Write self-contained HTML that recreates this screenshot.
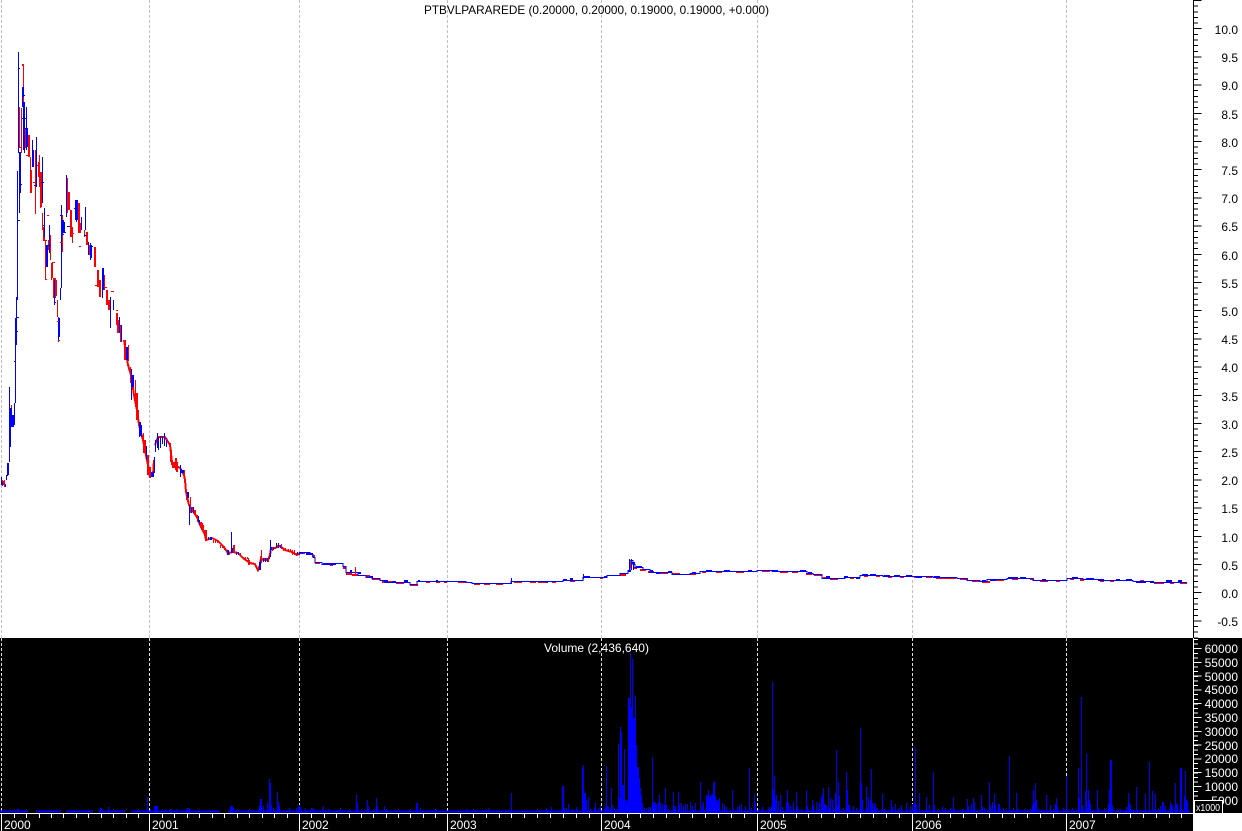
<!DOCTYPE html>
<html><head><meta charset="utf-8"><title>PTBVLPARAREDE</title>
<style>
html,body{margin:0;padding:0;background:#fff;width:1242px;height:831px;overflow:hidden}
svg{display:block;font-family:"Liberation Sans",Arial,sans-serif;font-size:12px}
.c path,.c line,.c rect{shape-rendering:crispEdges}
</style></head><body>
<svg class="c" width="1242" height="831" viewBox="0 0 1242 831" xmlns="http://www.w3.org/2000/svg">
<rect width="1242" height="831" fill="#fff"/>
<rect x="0" y="638" width="1242" height="175" fill="#000"/>
<rect x="0" y="813" width="1193" height="18" fill="#000"/>

<!-- gridlines -->
<g stroke="#c0c0c0" stroke-width="1" stroke-dasharray="3 2" fill="none">
<path d="M1.5 0V638M149.5 0V638M299.5 0V638M447.5 0V638M601.5 0V638M757.5 0V638M912.5 0V638M1066.5 0V638"/>
</g>
<g stroke="#e0e0e0" stroke-width="1" stroke-dasharray="3 2" fill="none">
<path d="M1.5 638V813M149.5 638V813M299.5 638V813M447.5 638V813M601.5 638V813M757.5 638V813M912.5 638V813M1066.5 638V813"/>
</g>

<!-- price tail red stubs -->
<path fill="none" stroke="#ff0000" stroke-width="2" d="M301 553H305M312 556H315M315 563H320M330 565H333M343 568H346M346 574H352M352 575H358M366 576H370M372 579H380M382 582H392M396 583H404M410 585H418M426 582H430M436 582H440M444 582H447M458 582H466M474 584H480M484 584H490M496 584H503M514 582H522M530 582H536M538 582H546M552 582H556M570 581H575M600 578H603M620 575H626M634 568H637M640 570H646M648 572H654M660 573H668M672 574H680M690 574H696M702 572H706M716 572H722M736 572H744M762 571H770M780 572H788M792 572H798M806 574H812M814 575H822M823 578H828M830 579H838M850 578H854M864 576H868M876 576H880M888 577H892M900 577H904M914 577H920M926 577H932M936 578H956M960 579H968M972 581H980M982 582H990M996 580H1004M1012 579H1018M1030 579H1034M1040 581H1048M1056 581H1060M1070 579H1074M1080 580H1084M1100 581H1104M1110 581H1114M1140 581H1144M1154 583H1164M1170 583H1174M1180 583H1187"/>
<!-- price tail stepped blue line -->
<path fill="none" stroke="#0000ff" stroke-width="1" d="M300 552.5H310V554.5H313V557.5H315V562.5H322V564.5H325V563.5H343V566.5H346V572.5H358V575.5H366V577.5H372V578.5H380V580.5H385V582.5H410V584.5H417V581.5H466V582.5H472V583.5H511V581.5H563V580.5H583V577.5H607V575.5H620V573.5H628V570.5H630V560.5H633V564.5H635V567.5H643V569.5H650V572.5H672V574.5H690V573.5H700V571.5H757V570.5H772V571.5H807V573.5H813V574.5H822V578.5H845V577.5H860V575.5H883V576.5H933V577.5H957V578.5H967V580.5H980V581.5H987V579.5H1007V578.5H1033V580.5H1067V578.5H1083V579.5H1100V580.5H1133V581.5H1153V582.5H1187"/>
<!-- price tail blue blocks -->
<path fill="none" stroke="#0000ff" stroke-width="2" d="M300 553H303M306 554H313M323 564H336M350 571H352M358 573H361M369 577H373M384 581H388M392 582H396M404 581H408M418 581H420M436 581H438M546 582H548M563 580H567M570 579H573M584 577H590M604 577H607M628 571H631M632 563H635M636 567H642M650 571H653M656 573H660M668 572H672M692 573H696M706 571H712M724 571H730M748 571H752M772 571H778M800 571H806M808 573H812M826 577H830M844 577H848M856 578H860M862 575H868M870 575H876M884 576H890M894 576H900M906 576H912M916 577H922M934 577H940M982 581H986M990 580H996M1008 578H1018M1020 578H1026M1042 580H1046M1072 578H1078M1086 579H1094M1098 580H1104M1116 580H1120M1126 580H1132M1136 582H1146M1150 582H1154M1166 581H1172M1178 581H1182"/>
<path fill="none" stroke="#0000ff" stroke-width="1" d="M511.5 578V584M583.5 574V579M629.5 559V570M631.5 559V570M633.5 562V570"/>
<path fill="none" stroke="#ff0000" stroke-width="1" d="M355.5 567V574M630.5 562V568"/>

<!-- early section connector -->
<path fill="none" stroke="#ff0000" stroke-width="2" d="M124 340L128 365L131 375L134 395L137 410L139 425L143 440L146 455L148 465L150 478M153 475L154 460M155 445L158 437L165 437L170 445L172 462L175 465L180 468L184 475L185 480L186 492L189 505L192 510L197 517L200 525L205 535L206 540L212 538L218 541L223 546L228 553L233 552L238 553L243 558L250 563L255 564L258 570L260 565L261 558L263 560L268 560L270 555L271 548L275 548L280 546L285 550L292 552L297 555L300 553"/>

<!-- price red bars -->
<path fill="none" stroke="#ff0000" stroke-width="1" d="M2.5 480V486M3.5 481V485M4.5 480V487M9.5 405V455M11.5 405V423M21.5 108V153M19.5 107V147M22.5 64V66M23.5 64V140M24.5 128V153M25.5 128V148M28.5 135V157M29.5 135V157M30.5 157V193M31.5 170V193M35.5 150V214M38.5 162V177M39.5 155V187M40.5 172V208M41.5 172V207M42.5 213V230M43.5 227V241M44.5 227V241M45.5 240V279M48.5 240V250M50.5 235V260M51.5 263V280M52.5 263V278M53.5 278V298M54.5 278V290M55.5 278V298M56.5 280V296M57.5 300V317M58.5 317V342M62.5 215V252M67.5 178V213M68.5 192V210M69.5 192V210M70.5 210V237M71.5 210V237M72.5 227V243M78.5 203V233M79.5 203V233M80.5 223V233M84.5 230V237M86.5 232V245M87.5 232V245M89.5 245V255M94.5 247V267M95.5 247V267M97.5 270V287M98.5 270V287M99.5 280V297M100.5 280V297M104.5 275V290M106.5 290V305M107.5 290V305M108.5 300V310M109.5 300V310M116.5 313V325M117.5 313V333M118.5 320V333M120.5 325V342M124.5 340V360M125.5 340V360M128.5 345V361M130.5 367V383M135.5 380V407M136.5 393V420M137.5 393V420M138.5 410V425M143.5 433V453M144.5 440V453M145.5 440V453M147.5 455V475M148.5 455V475M149.5 467V478M150.5 467V478M170.5 443V462M171.5 450V465M172.5 462V468M173.5 462V468M174.5 462V468M175.5 458V470M176.5 458V472M177.5 462V472M184.5 470V478M185.5 480V492M186.5 490V500M190.5 497V513M192.5 507V512M194.5 510V513M195.5 510V516M197.5 515V522M200.5 522V528M201.5 522V530M202.5 523V530M203.5 525V530M204.5 530V533M205.5 530V540M206.5 530V540M213.5 540V543M215.5 540V543M217.5 540V543M220.5 545V548M222.5 545V548M224.5 546V550M229.5 552V555M233.5 545V552M234.5 545V552M240.5 553V556M243.5 557V559M245.5 557V559M247.5 557V559M248.5 558V565M249.5 560V565M252.5 563V564M254.5 563V564M257.5 568V571M258.5 568V571M261.5 550V563M264.5 558V561M266.5 558V561M268.5 560V562M272.5 548V551M277.5 545V548M281.5 544V549M283.5 548V551M285.5 548V551M288.5 549V551M290.5 549V551M292.5 550V555M294.5 550V555M296.5 553V556"/>
<!-- price blue bars -->
<path fill="none" stroke="#0000ff" stroke-width="1" d="M1.5 477V485M2.5 482V485M5.5 484V487M6.5 475V480M7.5 463V476M8.5 463V475M9.5 387V462M10.5 408V447M11.5 408V427M12.5 415V427M13.5 415V427M14.5 403V425M15.5 318V403M16.5 297V345M17.5 171V300M18.5 52V153M19.5 152V213M20.5 152V193M22.5 87V107M23.5 87V97M23.5 102V150M24.5 102V153M26.5 107V150M27.5 128V147M32.5 140V167M33.5 150V167M36.5 137V187M42.5 157V203M44.5 208V237M46.5 245V267M47.5 245V267M49.5 225V253M54.5 280V305M59.5 318V337M58.5 318V340M60.5 288V300M61.5 205V288M62.5 220V235M63.5 220V233M64.5 222V233M66.5 175V217M75.5 200V220M76.5 200V222M77.5 200V220M81.5 217V230M85.5 207V230M88.5 242V255M90.5 243V260M91.5 245V258M102.5 268V298M103.5 268V290M110.5 297V328M113.5 300V310M119.5 317V333M121.5 325V342M126.5 347V360M127.5 347V360M131.5 369V400M132.5 375V387M133.5 375V387M139.5 422V437M140.5 422V436M141.5 425V437M146.5 446V460M151.5 472V477M152.5 472V477M153.5 472V477M154.5 457V473M155.5 440V452M157.5 433V448M158.5 437V450M160.5 436V448M162.5 436V444M164.5 433V446M166.5 440V447M180.5 465V477M181.5 469V473M182.5 470V473M183.5 470V473M187.5 492V498M188.5 492V498M189.5 505V525M191.5 507V513M193.5 507V513M198.5 516V522M199.5 520V525M208.5 537V540M210.5 537V540M211.5 537V540M227.5 550V555M228.5 550V555M231.5 532V553M232.5 548V553M236.5 552V555M238.5 552V555M259.5 562V570M260.5 560V570M263.5 558V562M265.5 558V562M267.5 558V562M269.5 557V559M270.5 540V557M271.5 547V550M273.5 547V550M276.5 543V548M278.5 543V548M280.5 545V548M297.5 552V555M299.5 552V555"/>
<!-- open/close ticks -->
<path fill="none" stroke="#0000ff" stroke-width="1" d="M14 361.5H16M15 331.5H18M16 317.5H19M17 220.5H20M18 68.5H20M19 184.5H22M22 95.5H25M22 118.5H26M24 128.5H28M62 234.5H64M60 215.5H62M34 185.5H37M41 182.5H44M43 225.5H45M48 245.5H51M54 302.5H56M58 333.5H60M64 232.5H66M67 226.5H70M74 208.5H76M84 235.5H87M90 246.5H93"/>
<path fill="none" stroke="#ff0000" stroke-width="1" d="M19 147.5H22M26 155.5H29M33 182.5H35M37 165.5H39M44 240.5H47M47 215.5H49M45 279.5H47M52 262.5H55M57 321.5H59M58 340.5H60M60 242.5H62M71 233.5H74M79 246.5H81M95 285.5H98M105 287.5H107M111 291.5H114M116 310.5H118"/>

<!-- volume bars -->
<path fill="none" stroke="#0000ff" stroke-width="2" d="M0 811.5H28M36 811.5H61M66 811.5H93M98 811.5H125M131 811.5H220M228 811.5H1190"/>
<path fill="none" stroke="#0000ff" stroke-width="1" d="M9.5 813V810M17.5 813V809M18.5 813V809M73.5 813V810M100.5 813V808M101.5 813V808M108.5 813V807M147.5 813V797M150.5 813V809M154.5 813V806M155.5 813V806M156.5 813V806M157.5 813V806M165.5 813V810M170.5 813V809M176.5 813V809M186.5 813V808M188.5 813V808M189.5 813V808M230.5 813V806M231.5 813V806M232.5 813V806M233.5 813V808M248.5 813V810M259.5 813V806M260.5 813V799M261.5 813V799M263.5 813V806M267.5 813V803M269.5 813V779M270.5 813V783M271.5 813V805M273.5 813V808M277.5 813V792M278.5 813V802M279.5 813V806M289.5 813V808M296.5 813V808M298.5 813V807M299.5 813V805M300.5 813V807M305.5 813V808M311.5 813V808M312.5 813V808M314.5 813V809M323.5 813V806M328.5 813V809M340.5 813V808M356.5 813V795M357.5 813V803M367.5 813V800M368.5 813V806M376.5 813V798M377.5 813V806M384.5 813V806M416.5 813V803M417.5 813V803M420.5 813V808M435.5 813V809M466.5 813V809M488.5 813V808M511.5 813V793M546.5 813V808M551.5 813V807M562.5 813V786M563.5 813V786M564.5 813V808M566.5 813V808M568.5 813V804M572.5 813V809M576.5 813V807M582.5 813V768M583.5 813V765M584.5 813V793M585.5 813V793M586.5 813V800M588.5 813V797M590.5 813V809M594.5 813V808M595.5 813V803M598.5 813V808M600.5 813V805M605.5 813V806M606.5 813V766M607.5 813V806M608.5 813V807M610.5 813V809M611.5 813V788M612.5 813V805M614.5 813V808M616.5 813V809M618.5 813V744M619.5 813V798M620.5 813V727M621.5 813V732M622.5 813V785M623.5 813V785M624.5 813V749M625.5 813V800M626.5 813V802M627.5 813V800M628.5 813V698M629.5 813V698M630.5 813V653M631.5 813V707M632.5 813V659M633.5 813V718M634.5 813V718M635.5 813V696M636.5 813V745M637.5 813V767M638.5 813V767M639.5 813V778M640.5 813V788M641.5 813V795M642.5 813V803M644.5 813V808M646.5 813V808M648.5 813V807M650.5 813V807M652.5 813V757M653.5 813V802M654.5 813V802M655.5 813V803M656.5 813V804M658.5 813V802M659.5 813V795M660.5 813V803M662.5 813V804M664.5 813V805M665.5 813V788M666.5 813V805M668.5 813V809M673.5 813V792M674.5 813V806M675.5 813V806M678.5 813V792M679.5 813V805M681.5 813V803M683.5 813V806M685.5 813V804M687.5 813V804M690.5 813V802M692.5 813V806M695.5 813V803M700.5 813V782M702.5 813V805M703.5 813V802M706.5 813V795M707.5 813V795M708.5 813V790M709.5 813V797M710.5 813V795M711.5 813V796M712.5 813V794M713.5 813V783M714.5 813V781M715.5 813V796M716.5 813V800M717.5 813V802M718.5 813V800M719.5 813V798M722.5 813V803M724.5 813V805M726.5 813V807M732.5 813V790M737.5 813V807M739.5 813V806M741.5 813V804M745.5 813V806M749.5 813V768M751.5 813V808M754.5 813V794M755.5 813V802M759.5 813V809M762.5 813V807M768.5 813V807M771.5 813V806M772.5 813V682M773.5 813V790M774.5 813V776M775.5 813V799M776.5 813V795M778.5 813V801M780.5 813V795M782.5 813V807M786.5 813V802M787.5 813V790M788.5 813V803M790.5 813V806M793.5 813V802M796.5 813V792M797.5 813V806M801.5 813V809M806.5 813V790M807.5 813V806M812.5 813V800M813.5 813V805M816.5 813V802M819.5 813V803M821.5 813V797M822.5 813V794M823.5 813V788M824.5 813V804M825.5 813V804M826.5 813V805M828.5 813V787M829.5 813V808M830.5 813V798M832.5 813V800M835.5 813V793M836.5 813V750M837.5 813V806M838.5 813V782M839.5 813V796M843.5 813V808M846.5 813V772M847.5 813V790M848.5 813V805M849.5 813V805M853.5 813V806M856.5 813V808M860.5 813V728M861.5 813V783M862.5 813V800M866.5 813V787M867.5 813V808M868.5 813V797M870.5 813V800M871.5 813V769M872.5 813V803M874.5 813V805M875.5 813V803M877.5 813V808M882.5 813V794M884.5 813V809M891.5 813V800M892.5 813V807M895.5 813V804M898.5 813V808M901.5 813V805M906.5 813V803M910.5 813V806M912.5 813V804M914.5 813V803M915.5 813V747M916.5 813V805M919.5 813V793M922.5 813V810M926.5 813V797M929.5 813V805M933.5 813V772M934.5 813V805M942.5 813V806M945.5 813V808M950.5 813V808M953.5 813V797M954.5 813V809M962.5 813V809M967.5 813V799M968.5 813V806M971.5 813V804M973.5 813V798M974.5 813V802M981.5 813V795M982.5 813V806M984.5 813V808M989.5 813V782M990.5 813V805M992.5 813V802M994.5 813V794M995.5 813V805M998.5 813V804M999.5 813V804M1003.5 813V808M1009.5 813V756M1013.5 813V808M1016.5 813V793M1018.5 813V809M1024.5 813V809M1030.5 813V809M1032.5 813V805M1033.5 813V790M1034.5 813V802M1035.5 813V783M1036.5 813V800M1038.5 813V809M1043.5 813V809M1046.5 813V795M1050.5 813V805M1055.5 813V804M1056.5 813V798M1057.5 813V806M1063.5 813V808M1066.5 813V776M1072.5 813V808M1078.5 813V768M1079.5 813V798M1081.5 813V697M1082.5 813V805M1085.5 813V791M1086.5 813V754M1087.5 813V808M1088.5 813V790M1089.5 813V800M1090.5 813V804M1097.5 813V790M1098.5 813V808M1104.5 813V808M1108.5 813V804M1109.5 813V789M1110.5 813V760M1111.5 813V760M1112.5 813V805M1120.5 813V809M1125.5 813V810M1126.5 813V807M1128.5 813V793M1129.5 813V803M1130.5 813V805M1133.5 813V810M1136.5 813V787M1137.5 813V810M1145.5 813V794M1149.5 813V762M1152.5 813V791M1155.5 813V794M1158.5 813V809M1160.5 813V806M1162.5 813V802M1163.5 813V802M1165.5 813V806M1170.5 813V802M1171.5 813V804M1172.5 813V806M1175.5 813V783M1176.5 813V803M1177.5 813V805M1180.5 813V768M1181.5 813V768M1184.5 813V796M1185.5 813V771M1186.5 813V800M1187.5 813V802"/>

<!-- axes -->
<path fill="none" stroke="#fff" stroke-width="1" d="M0 813.5H1193M1.5 813V831M149.5 813V831M299.5 813V831M447.5 813V831M601.5 813V831M757.5 813V831M912.5 813V831M1066.5 813V831"/>
<path fill="none" stroke="#fff" stroke-width="1" d="M14.5 814V818M26.5 814V818M39.5 814V818M51.5 814V818M63.5 814V818M76.5 814V818M88.5 814V818M101.5 814V818M113.5 814V818M126.5 814V818M138.5 814V818M162.5 814V818M174.5 814V818M187.5 814V818M199.5 814V818M212.5 814V818M224.5 814V818M237.5 814V818M249.5 814V818M262.5 814V818M274.5 814V818M287.5 814V818M311.5 814V818M324.5 814V818M336.5 814V818M349.5 814V818M361.5 814V818M373.5 814V818M386.5 814V818M398.5 814V818M410.5 814V818M423.5 814V818M435.5 814V818M460.5 814V818M473.5 814V818M486.5 814V818M499.5 814V818M511.5 814V818M524.5 814V818M537.5 814V818M550.5 814V818M563.5 814V818M576.5 814V818M589.5 814V818M614.5 814V818M627.5 814V818M640.5 814V818M653.5 814V818M666.5 814V818M679.5 814V818M692.5 814V818M705.5 814V818M718.5 814V818M731.5 814V818M744.5 814V818M770.5 814V818M783.5 814V818M796.5 814V818M808.5 814V818M821.5 814V818M834.5 814V818M847.5 814V818M860.5 814V818M873.5 814V818M886.5 814V818M899.5 814V818M925.5 814V818M938.5 814V818M950.5 814V818M963.5 814V818M976.5 814V818M989.5 814V818M1002.5 814V818M1014.5 814V818M1027.5 814V818M1040.5 814V818M1053.5 814V818M1079.5 814V818M1092.5 814V818M1105.5 814V818M1117.5 814V818M1130.5 814V818M1143.5 814V818M1156.5 814V818M1169.5 814V818M1181.5 814V818"/>
<path fill="none" stroke="#000" stroke-width="1" d="M1193.5 0V638"/>
<line x1="1196" y1="0" x2="1196" y2="638" stroke="#000" stroke-width="4" stroke-dasharray="1 4.64"/>
<line x1="1197.5" y1="0" x2="1197.5" y2="638" stroke="#000" stroke-width="8" stroke-dasharray="1 27.2"/>
<path fill="none" stroke="#fff" stroke-width="1" d="M1193.5 638V813"/>
<line x1="1196" y1="639" x2="1196" y2="813" stroke="#fff" stroke-width="4" stroke-dasharray="1 3.6"/>
<line x1="1197.5" y1="648" x2="1197.5" y2="813" stroke="#fff" stroke-width="8" stroke-dasharray="1 12.8"/>

<!-- text -->
<text x="424" y="14" fill="#000" textLength="345" lengthAdjust="spacingAndGlyphs">PTBVLPARAREDE (0.20000, 0.20000, 0.19000, 0.19000, +0.000)</text>
<g fill="#000" text-anchor="end">
<text x="1238" y="34">10.0</text><text x="1238" y="62">9.5</text><text x="1238" y="90">9.0</text><text x="1238" y="119">8.5</text><text x="1238" y="147">8.0</text><text x="1238" y="175">7.5</text><text x="1238" y="203">7.0</text><text x="1238" y="231">6.5</text><text x="1238" y="260">6.0</text><text x="1238" y="288">5.5</text><text x="1238" y="316">5.0</text><text x="1238" y="344">4.5</text><text x="1238" y="372">4.0</text><text x="1238" y="401">3.5</text><text x="1238" y="429">3.0</text><text x="1238" y="457">2.5</text><text x="1238" y="485">2.0</text><text x="1238" y="513">1.5</text><text x="1238" y="542">1.0</text><text x="1238" y="570">0.5</text><text x="1238" y="598">0.0</text><text x="1238" y="626">-0.5</text>
</g>
<text x="544" y="652" fill="#fff" textLength="105" lengthAdjust="spacingAndGlyphs">Volume (2,436,640)</text>
<g fill="#fff" text-anchor="end">
<text x="1238" y="653">60000</text><text x="1238" y="667">55000</text><text x="1238" y="681">50000</text><text x="1238" y="694">45000</text><text x="1238" y="708">40000</text><text x="1238" y="722">35000</text><text x="1238" y="736">30000</text><text x="1238" y="750">25000</text><text x="1238" y="763">20000</text><text x="1238" y="777">15000</text><text x="1238" y="791">10000</text><text x="1238" y="805">5000</text>
</g>
<rect x="1194.5" y="800.5" width="28" height="13" fill="#000" stroke="#fff" stroke-width="1"/>
<text x="1196" y="811" fill="#fff" style="font-size:10px" textLength="24" lengthAdjust="spacingAndGlyphs">x1000</text>
<g fill="#fff">
<text x="4" y="829">2000</text><text x="152" y="829">2001</text><text x="302" y="829">2002</text><text x="450" y="829">2003</text><text x="604" y="829">2004</text><text x="760" y="829">2005</text><text x="915" y="829">2006</text><text x="1069" y="829">2007</text>
</g>
</svg>
</body></html>
